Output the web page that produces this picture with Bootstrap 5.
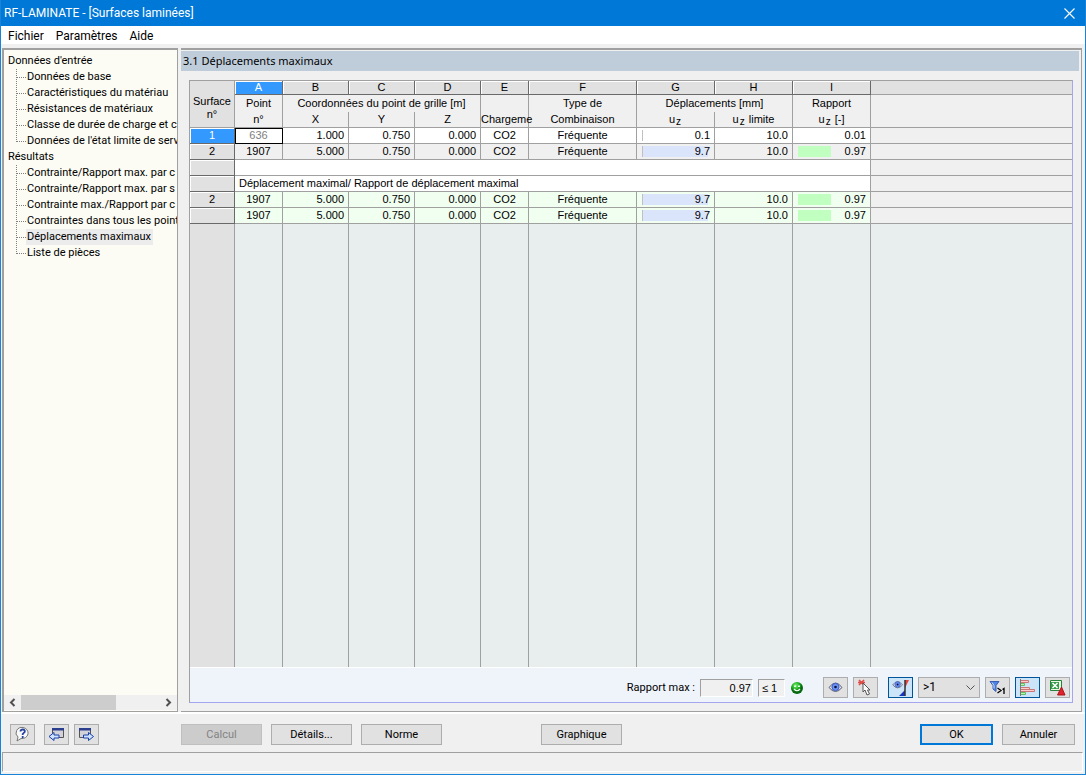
<!DOCTYPE html>
<html lang="fr">
<head>
<meta charset="utf-8">
<meta name="viewport" content="width=device-width, initial-scale=1">
<title>RF-LAMINATE - [Surfaces laminées]</title>
<link href="https://cdn.jsdelivr.net/npm/bootstrap@5.3.0/dist/css/bootstrap.min.css" rel="stylesheet">
<style>
:root { --line: #a0a0a0; --face: #f0f0f0; --btn: #e1e1e1; --accent: #0078d7; --grid-font: "Liberation Sans", sans-serif; }
body { background: var(--face); color: #000; font: 11px/16px Roboto, sans-serif; }
.app-window { border: 1px solid #1883d7; border-top: 0; }
.title-bar { background: var(--accent); color: #fff; height: 26px; padding: 0 8px 0 3px; font-size: 12px; }
.title-bar button { width: 16px; height: 16px; color: #fff; }
.menu-bar { height: 18px; background: #fff; font-size: 12px; padding-left: 7px; gap: 12px; margin-bottom: 4px; line-height: 20px; }
.menu-bar a { color: #000; text-decoration: none; }
.work-area { gap: 3px; padding: 0 3px 0 1px; min-height: 0; }
.tree-pane { width: 176px; background: #fcfcf4; border: 1px solid var(--line); border-width: 2px 1px 1px 2px; padding: 2px 0 1px; flex: none; }
.tree-pane ul { list-style: none; margin: 0; padding: 1px 0 0; white-space: nowrap; overflow: hidden; }
.tree-pane a { color: #000; text-decoration: none; display: inline-block; height: 16px; padding: 0 2px 0 1px; }
.tree-root { padding-left: 3px; }
.tree-leaf { padding-left: 12px; display: flex; }
.tree-leaf svg { flex: none; width: 10px; height: 16px; }
.tree-leaf a.current { background: #ececec; }
.h-scroll { height: 15px; background: var(--face); }
.h-scroll button { width: 17px; height: 15px; }
.h-thumb { width: 95px; height: 15px; background: #cdcdcd; }
.content-pane { border: 1px solid var(--line); border-width: 2px 1px 1px 0; padding: 1px 2px 8px 0; min-width: 0; }
.section-title { background: #bfcddb; height: 20px; font: 11px/20px "Noto Sans", sans-serif; padding-left: 2px; margin: 0 0 9px; }
.grid-frame { margin: 0 6px 0 8px; border: 1px solid #a6a6f0; border-top-color: var(--line); border-left-color: var(--line); min-height: 0; }
.grid-scroll { min-height: 0; }
.result-grid { border-collapse: separate; border-spacing: 0; table-layout: fixed; width: 100%; height: 100%; font: 11px/15px var(--grid-font); }
.result-grid th, .result-grid td { font-weight: 400; padding: 0 4px; border: 0 solid var(--line); border-width: 0 1px 1px 0; white-space: nowrap; text-align: center; height: 16px; background: var(--face); }
.result-grid tr > :last-child { border-right: 0; }
.result-grid thead th { height: 16px; padding: 0; }
.result-grid .letters th { height: 14px; line-height: 13px; background: var(--btn); border-color: #696969; box-shadow: inset 1px 1px #fff; }
.result-grid .letters .corner { border-color: var(--line); line-height: 13px; box-shadow: none; padding-top: 8px; }
.result-grid .letters .spare { box-shadow: none; border-color: var(--line); }
.result-grid .letters .chosen { background: #3399ff; color: #fff; }
.result-grid .upper th { border-bottom: 0; height: 17px; }
.result-grid tbody th { background: var(--btn); box-shadow: inset 1px 1px #fff; border-color: #696969; }
.result-grid tbody .chosen th { background: #3399ff; color: #fff; }
.result-grid .plain td { background: #fff; }
.result-grid .summary td { background: #f0fff0; }
.result-grid tbody td.spare { background: var(--face); }
.result-grid td.num { text-align: right; }
.result-grid td.note { text-align: left; }
.result-grid td.focus-cell { color: #808080; outline: 1px solid #000; outline-offset: -1px; }
.result-grid .blank th { background: var(--btn); box-shadow: none; border-color: var(--line); }
.result-grid .blank th, .result-grid .blank td { height: auto; border-bottom: 0; }
.result-grid .blank td { background: #e8eeee; }
.result-grid sub { font-size: 10px; bottom: -2px; margin: 0 1px; }
.meter-cell { display: grid; grid-template-columns: 100%; margin-left: 1px; }
.meter-cell > * { grid-area: 1 / 1; }
.meter-cell i { height: 11px; align-self: center; border-left: 1px solid #c0c0c0; background: #dae5fc; }
.meter-cell.green i { background: #c0ffc0; border: 0; }
.grid-tools { background: #eff3fa; border-top: 1px solid #fff; height: 35px; padding: 5px 2px 0 0; gap: 5px; }
.group-start { margin-left: 5px; }
.smiley { margin: 0 15px 0 1px; flex: none; }
.sunken { border: 1px solid #fff; border-top-color: var(--line); border-left-color: var(--line); border-radius: 0; background: var(--face); height: 18px; padding: 0 1px; text-align: right; font: 11px/16px var(--grid-font); color: #000; }
.w-value { width: 53px; }
.w-limit { width: 27px; text-align: left; padding-left: 3px; }
.face-btn { border: 1px solid #adadad; border-radius: 0; background: var(--btn); height: 21px; padding: 0; font-size: 11px; line-height: 19px; color: #000; flex: none; }
.face-btn:disabled { background: #ccc; color: #838383; border-color: #bfbfbf; opacity: 1; }
.face-btn.active-tool { background: #cce4f7; border-color: #005499; }
.face-btn.default-btn { border: 2px solid var(--accent); line-height: 17px; }
.icon-size { width: 25px; }
.icon-size svg { display: block; margin: auto; }
.text-size { width: 81px; }
.end-size { width: 73px; }
.filter-box { width: 62px; height: 21px; border: 1px solid #adadad; border-radius: 0; font-size: 12px; line-height: 19px; padding: 0 16px 0 4px; color: #000; background: var(--btn) url("data:image/svg+xml,%3Csvg xmlns='http://www.w3.org/2000/svg' width='9' height='6'%3E%3Cpath d='M.5.5l4 4 4-4' fill='none' stroke='%23555'/%3E%3C/svg%3E") no-repeat right 4px center; background-size: 9px 6px; }
.command-bar { border-top: 2px solid #fff; height: 40px; padding: 3px 10px 0 9px; }
.status-bar { height: 20px; border: 1px solid #fff; border-top-color: var(--line); border-left-color: var(--line); margin: 0 2px 2px 1px; }
.gap-before { margin-left: 9px; }
.gap-small { margin-left: 5px; }
.lead-tools { width: 171px; }
.main-commands { gap: 9px; }
.apart { margin-left: 90px; }
</style>
</head>
<body>
<svg width="0" height="0" class="position-absolute" aria-hidden="true">
  <symbol id="branch" viewBox="0 0 10 16"><path d="M.5 0v16M1 8.500h9" stroke="#808080" stroke-dasharray="1 1"/></symbol>
  <symbol id="branch-end" viewBox="0 0 10 16"><path d="M.5 0v9M1 8.500h9" stroke="#808080" stroke-dasharray="1 1"/></symbol>
  <g id="eye"><path d="M1 6.500q6.500-9 13 0-6.500 8-13 0z" fill="#e4e6ec" stroke="#55586a"/><circle cx="7.500" cy="6" r="3.600" fill="#6c94f2" stroke="#3a5cc8"/><circle cx="7.500" cy="6" r="1.300" fill="#0a1040"/></g>
  <g id="pane"><path d="M1.500 2.500h11v9h-11z" fill="#d2d2d8" stroke="#555"/><path d="M1 2h12v2.500H1z" fill="#2b3f8e"/></g>
</svg>
<div class="app-window d-flex flex-column vh-100">
  <header class="title-bar d-flex align-items-center justify-content-between">
    <span>RF-LAMINATE - [Surfaces laminées]</span>
    <button class="border-0 bg-transparent p-0 d-flex align-items-center justify-content-center" aria-label="Fermer"><svg width="11" height="11" viewBox="0 0 11 11" stroke="#fff" stroke-width="1.1"><path d="M.5.5l10 10M10.500.5l-10 10"/></svg></button>
  </header>
  <nav class="menu-bar d-flex"><a href="#">Fichier</a><a href="#">Paramètres</a><a href="#">Aide</a></nav>

  <main class="work-area d-flex flex-grow-1">
    <aside class="tree-pane d-flex flex-column">
      <ul class="flex-grow-1">
        <li class="tree-root"><a href="#">Données d'entrée</a></li>
        <li class="tree-leaf"><svg><use href="#branch"/></svg><a href="#">Données de base</a></li>
        <li class="tree-leaf"><svg><use href="#branch"/></svg><a href="#">Caractéristiques du matériau</a></li>
        <li class="tree-leaf"><svg><use href="#branch"/></svg><a href="#">Résistances de matériaux</a></li>
        <li class="tree-leaf"><svg><use href="#branch"/></svg><a href="#">Classe de durée de charge et c</a></li>
        <li class="tree-leaf"><svg><use href="#branch-end"/></svg><a href="#">Données de l'état limite de serv</a></li>
        <li class="tree-root"><a href="#">Résultats</a></li>
        <li class="tree-leaf"><svg><use href="#branch"/></svg><a href="#">Contrainte/Rapport max. par c</a></li>
        <li class="tree-leaf"><svg><use href="#branch"/></svg><a href="#">Contrainte/Rapport max. par s</a></li>
        <li class="tree-leaf"><svg><use href="#branch"/></svg><a href="#">Contrainte max./Rapport par c</a></li>
        <li class="tree-leaf"><svg><use href="#branch"/></svg><a href="#">Contraintes dans tous les point</a></li>
        <li class="tree-leaf"><svg><use href="#branch"/></svg><a href="#" class="current">Déplacements maximaux</a></li>
        <li class="tree-leaf"><svg><use href="#branch-end"/></svg><a href="#">Liste de pièces</a></li>
      </ul>
      <div class="h-scroll d-flex">
        <button class="border-0 bg-transparent p-0 d-flex align-items-center justify-content-center" aria-label="Défiler à gauche"><svg width="7" height="9" fill="none" stroke="#505050" stroke-width="2"><path d="M5.500 1L2 4.500 5.500 8"/></svg></button>
        <div class="h-thumb"></div>
        <button class="border-0 bg-transparent p-0 ms-auto d-flex align-items-center justify-content-center" aria-label="Défiler à droite"><svg width="7" height="9" fill="none" stroke="#505050" stroke-width="2"><path d="M1.500 1L5 4.500 1.500 8"/></svg></button>
      </div>
    </aside>

    <section class="content-pane d-flex flex-column flex-grow-1">
      <h1 class="section-title">3.1 Déplacements maximaux</h1>
      <div class="grid-frame d-flex flex-column flex-grow-1">
        <div class="grid-scroll flex-grow-1">
        <table class="result-grid">
          <colgroup><col style="width:45px"><col style="width:48px"><col style="width:66px"><col style="width:66px"><col style="width:66px"><col style="width:48px"><col style="width:108px"><col style="width:78px"><col style="width:78px"><col style="width:78px"><col></colgroup>
          <thead>
            <tr class="letters"><th rowspan="3" class="corner">Surface<br>n°</th><th class="chosen">A</th><th>B</th><th>C</th><th>D</th><th>E</th><th>F</th><th>G</th><th>H</th><th>I</th><th class="spare"></th></tr>
            <tr class="upper"><th>Point</th><th colspan="3">Coordonnées du point de grille [m]</th><th></th><th>Type de</th><th colspan="2">Déplacements [mm]</th><th>Rapport</th><th></th></tr>
            <tr><th>n°</th><th>X</th><th>Y</th><th>Z</th><th>Chargeme</th><th>Combinaison</th><th>u<sub>z</sub></th><th>u<sub>z</sub> limite</th><th>u<sub>z</sub> [-]</th><th></th></tr>
          </thead>
          <tbody>
            <tr class="plain chosen"><th>1</th><td class="focus-cell">636</td><td class="num">1.000</td><td class="num">0.750</td><td class="num">0.000</td><td>CO2</td><td>Fréquente</td><td class="num"><div class="meter-cell"><i style="width:1%"></i><span>0.1</span></div></td><td class="num">10.0</td><td class="num">0.01</td><td class="spare"></td></tr>
            <tr><th>2</th><td>1907</td><td class="num">5.000</td><td class="num">0.750</td><td class="num">0.000</td><td>CO2</td><td>Fréquente</td><td class="num"><div class="meter-cell"><i style="width:97%"></i><span>9.7</span></div></td><td class="num">10.0</td><td class="num"><div class="meter-cell green"><i style="width:48%"></i><span>0.97</span></div></td><td class="spare"></td></tr>
            <tr class="plain"><th></th><td colspan="9"></td><td class="spare"></td></tr>
            <tr class="plain"><th></th><td colspan="9" class="note">Déplacement maximal/ Rapport de déplacement maximal</td><td class="spare"></td></tr>
            <tr class="summary"><th>2</th><td>1907</td><td class="num">5.000</td><td class="num">0.750</td><td class="num">0.000</td><td>CO2</td><td>Fréquente</td><td class="num"><div class="meter-cell"><i style="width:97%"></i><span>9.7</span></div></td><td class="num">10.0</td><td class="num"><div class="meter-cell green"><i style="width:48%"></i><span>0.97</span></div></td><td class="spare"></td></tr>
            <tr class="summary"><th></th><td>1907</td><td class="num">5.000</td><td class="num">0.750</td><td class="num">0.000</td><td>CO2</td><td>Fréquente</td><td class="num"><div class="meter-cell"><i style="width:97%"></i><span>9.7</span></div></td><td class="num">10.0</td><td class="num"><div class="meter-cell green"><i style="width:48%"></i><span>0.97</span></div></td><td class="spare"></td></tr>
            <tr class="blank"><th></th><td></td><td></td><td></td><td></td><td></td><td></td><td></td><td></td><td></td><td></td></tr>
          </tbody>
        </table>
        </div>
        <div class="grid-tools d-flex align-items-center justify-content-end">
          <label for="rapport">Rapport max :</label>
          <input id="rapport" class="sunken w-value" value="0.97" readonly>
          <input class="sunken w-limit" value="≤ 1" aria-label="Limite" readonly>
          <svg class="smiley" width="12" height="12" viewBox="0 0 12 12"><defs><radialGradient id="ball" cx=".4" cy=".3"><stop offset="0" stop-color="#7fef7f"/><stop offset=".6" stop-color="#22b422"/><stop offset="1" stop-color="#066a10"/></radialGradient></defs><circle cx="6" cy="6" r="6" fill="url(#ball)"/><path d="M3 3.500h2v1.500H3zM7 3.500h2v1.500H7z" fill="#e4ffe4"/><path d="M3 7q3 3.500 6 0" fill="none" stroke="#fff" stroke-width="1.200"/></svg>
          <button class="btn face-btn icon-size" aria-label="Afficher"><svg width="15" height="13" viewBox="0 0 15 13"><use href="#eye"/></svg></button>
          <button class="btn face-btn icon-size" aria-label="Sélectionner"><svg width="17" height="17" viewBox="0 0 17 17"><path d="M2 1l5 5M7 1L2 6M1 3.500h7" stroke="#e04a44" stroke-width="1.600"/><path d="M6 4v9l2-2 2 5 2.500-1-2-4h2.500z" fill="#fff" stroke="#555"/></svg></button>
          <button class="btn face-btn icon-size active-tool group-start" aria-label="Affichage en couleur"><svg width="19" height="18" viewBox="0 0 19 18"><g transform="translate(1 1) scale(.75)"><use href="#eye"/></g><path d="M14 1h4l-4 8z" fill="#e8443c"/><path d="M14 7v3l-4 4h4z" fill="#d8d8ee"/><path d="M14 11v6H8z" fill="#1534bd"/><path d="M14 1v16" stroke="#333" stroke-width="1.500" fill="none"/></svg></button>
          <select class="form-select filter-box" aria-label="Filtre"><option>&gt;1</option></select>
          <button class="btn face-btn icon-size" aria-label="Filtrer"><svg width="17" height="15" viewBox="0 0 17 15"><path d="M1 1.500h9L7 5.500v6L4 9V5.500z" fill="#4f83e1" stroke="#3b5fb4"/><path d="M3 2.500l2 3v3" stroke="#c9e0ff" fill="none"/><path d="M8.500 8l3.500 2.500L8.500 13M13.500 9.500l1.500-1V14" fill="none" stroke="#000" stroke-width="1.300"/></svg></button>
          <button class="btn face-btn icon-size active-tool" aria-label="Barres"><svg width="17" height="17" viewBox="0 0 17 17"><path d="M1.500 1.500h8v2h-8zM1.500 8.500h9v2h-9zM1.500 10.500h14v2h-14z" fill="#fcc" stroke="#c77"/><path d="M1.500 4.500h4v2h-4zM1.500 13.500h5v2h-5z" fill="#afa" stroke="#6b6"/><path d="M1.500 0v17" stroke="#777"/></svg></button>
          <button class="btn face-btn icon-size" aria-label="Exporter vers Excel"><svg width="17" height="17" viewBox="0 0 17 17"><path d="M1.500 1.500h11v10h-11z" fill="#eaf5e4" stroke="#27823c"/><path d="M2 3h8v7H2z" fill="#379b4c"/><path d="M3.500 4l5 5M8.500 4l-5 5" stroke="#fff" stroke-width="1.500"/><path d="M12.500 8l3.500 8H8.500z" fill="#e3212c" stroke="#a8141c"/></svg></button>
        </div>
      </div>
    </section>
  </main>

  <footer>
    <div class="command-bar d-flex align-items-center">
      <div class="d-flex lead-tools">
        <button class="btn face-btn icon-size" aria-label="Aide"><svg width="17" height="17" viewBox="0 0 17 17"><path d="M9 1.500a6 5.500 0 1 1-2 11L3 15l1-4A6 5.500 0 0 1 9 1.500z" fill="#fafafa" stroke="#777"/><path d="M6.500 5.500q0-2 2.300-2t2 2.300L8.700 8v1M8.700 10v2" fill="none" stroke="#2544a0" stroke-width="1.800"/></svg></button>
        <button class="btn face-btn icon-size gap-before" aria-label="Précédent"><svg width="17" height="17" viewBox="0 0 17 17"><use href="#pane" x="3"/><path d="M1 10.500l5-4v2.500h5v3H6v2.500z" fill="#cfe2ff" stroke="#1741a8"/></svg></button>
        <button class="btn face-btn icon-size gap-small" aria-label="Suivant"><svg width="17" height="17" viewBox="0 0 17 17"><use href="#pane"/><path d="M15.500 10.500l-5-4v2.500h-5v3h5v2.500z" fill="#cfe2ff" stroke="#1741a8"/></svg></button>
      </div>
      <div class="d-flex flex-grow-1 main-commands">
        <button class="btn face-btn text-size" disabled>Calcul</button>
        <button class="btn face-btn text-size">Détails...</button>
        <button class="btn face-btn text-size">Norme</button>
        <button class="btn face-btn text-size apart">Graphique</button>
        <button class="btn face-btn end-size default-btn ms-auto">OK</button>
        <button class="btn face-btn end-size">Annuler</button>
      </div>
    </div>
    <div class="status-bar"></div>
  </footer>
</div>
<script src="https://cdn.jsdelivr.net/npm/bootstrap@5.3.0/dist/js/bootstrap.bundle.min.js"></script>
</body>
</html>
